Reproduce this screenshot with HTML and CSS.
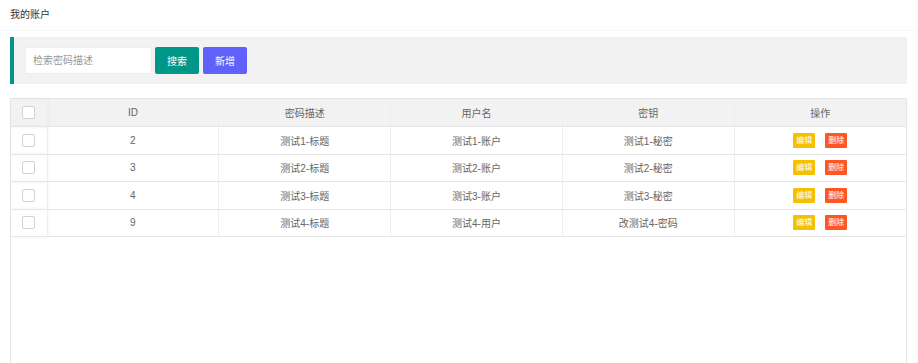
FILE: index.html
```html
<!DOCTYPE html>
<html lang="zh-CN">
<head>
  <meta charset="UTF-8">
  <title>我的账户</title>
  <link rel="stylesheet" href="styles.css">
</head>
<body>
  <div class="page-head">我的账户</div>

  <div class="page-body">
    <div class="search-bar">
      <input type="text" class="search-input" placeholder="检索密码描述">
      <button class="btn btn-green">搜索</button>
      <button class="btn btn-blue">新增</button>
    </div>

    <div class="table-box">
      <table class="grid">
        <colgroup>
          <col class="c-check">
          <col><col><col><col><col>
        </colgroup>
        <thead>
          <tr>
            <th class="check-cell"><span class="checkbox"></span></th>
            <th>ID</th>
            <th>密码描述</th>
            <th>用户名</th>
            <th>密钥</th>
            <th>操作</th>
          </tr>
        </thead>
        <tbody>
          <tr>
            <td class="check-cell"><span class="checkbox"></span></td>
            <td>2</td><td>测试1-标题</td><td>测试1-账户</td><td>测试1-秘密</td>
            <td><span class="tag tag-edit">编辑</span><span class="tag tag-del">删除</span></td>
          </tr>
          <tr>
            <td class="check-cell"><span class="checkbox"></span></td>
            <td>3</td><td>测试2-标题</td><td>测试2-账户</td><td>测试2-秘密</td>
            <td><span class="tag tag-edit">编辑</span><span class="tag tag-del">删除</span></td>
          </tr>
          <tr>
            <td class="check-cell"><span class="checkbox"></span></td>
            <td>4</td><td>测试3-标题</td><td>测试3-账户</td><td>测试3-秘密</td>
            <td><span class="tag tag-edit">编辑</span><span class="tag tag-del">删除</span></td>
          </tr>
          <tr>
            <td class="check-cell"><span class="checkbox"></span></td>
            <td>9</td><td>测试4-标题</td><td>测试4-用户</td><td>改测试4-密码</td>
            <td><span class="tag tag-edit">编辑</span><span class="tag tag-del">删除</span></td>
          </tr>
        </tbody>
      </table>
    </div>
  </div>
</body>
</html>
```

FILE: styles.css
```css
body {
  margin: 0;
  font-family: "Liberation Sans", "Noto Sans CJK SC", sans-serif;
  font-size: 10px;
  color: #666;
  background: #fff;
  overflow: hidden;
}
.page-head {
  height: 30px;
  line-height: 29px;
  padding-left: 10px;
  color: #333;
  border-bottom: 1px solid #f6f6f6;
}
.page-body { padding: 6px 11px 0 10px; }

.search-bar {
  display: flex;
  align-items: center;
  gap: 3px;
  height: 47px;
  padding-left: 11px;
  background: #f2f2f2;
  border-left: 4px solid #009688;
}
.search-input {
  width: 127px;
  height: 27px;
  box-sizing: border-box;
  border: 1px solid #eee;
  padding: 0 7px;
  font: inherit;
  color: #333;
  background: #fff;
  outline: none;
}
.search-input::placeholder { color: #999; }
.btn {
  height: 27px;
  width: 44px;
  border: none;
  border-radius: 2px;
  color: #fff;
  font: inherit;
  cursor: pointer;
}
.btn-green { background: #009688; }
.btn-blue { background: #6060fa; margin-left: 1px; }

.table-box {
  margin-top: 14px;
  height: 280px;
  border: 1px solid #e6e6e6;
  border-bottom: none;
}
.grid {
  width: 100%;
  border-collapse: collapse;
  table-layout: fixed;
}
.c-check { width: 36px; }
.grid th, .grid td {
  height: 26.5px;
  padding: 0;
  text-align: center;
  border-right: 1px solid #eee;
  border-bottom: 1px solid #e6e6e6;
  font-weight: normal;
}
.grid th:last-child, .grid td:last-child { border-right: none; }
.grid thead tr { background: #f2f2f2; }
.grid th { height: 27px; color: #666; }
.check-cell { box-shadow: 1px 0 4px rgba(0,0,0,0.06); }
.checkbox {
  display: inline-block;
  width: 11px;
  height: 11px;
  border: 1px solid #d2d2d2;
  border-radius: 2px;
  background: #fff;
  vertical-align: middle;
}
.tag {
  display: inline-block;
  height: 15px;
  line-height: 15px;
  padding: 0 3px;
  font-size: 8px;
  color: #fff;
  border-radius: 1px;
  vertical-align: middle;
}
.tag-edit { background: #f5c000; margin-right: 10px; }
.tag-del { background: #ff5722; }
```
